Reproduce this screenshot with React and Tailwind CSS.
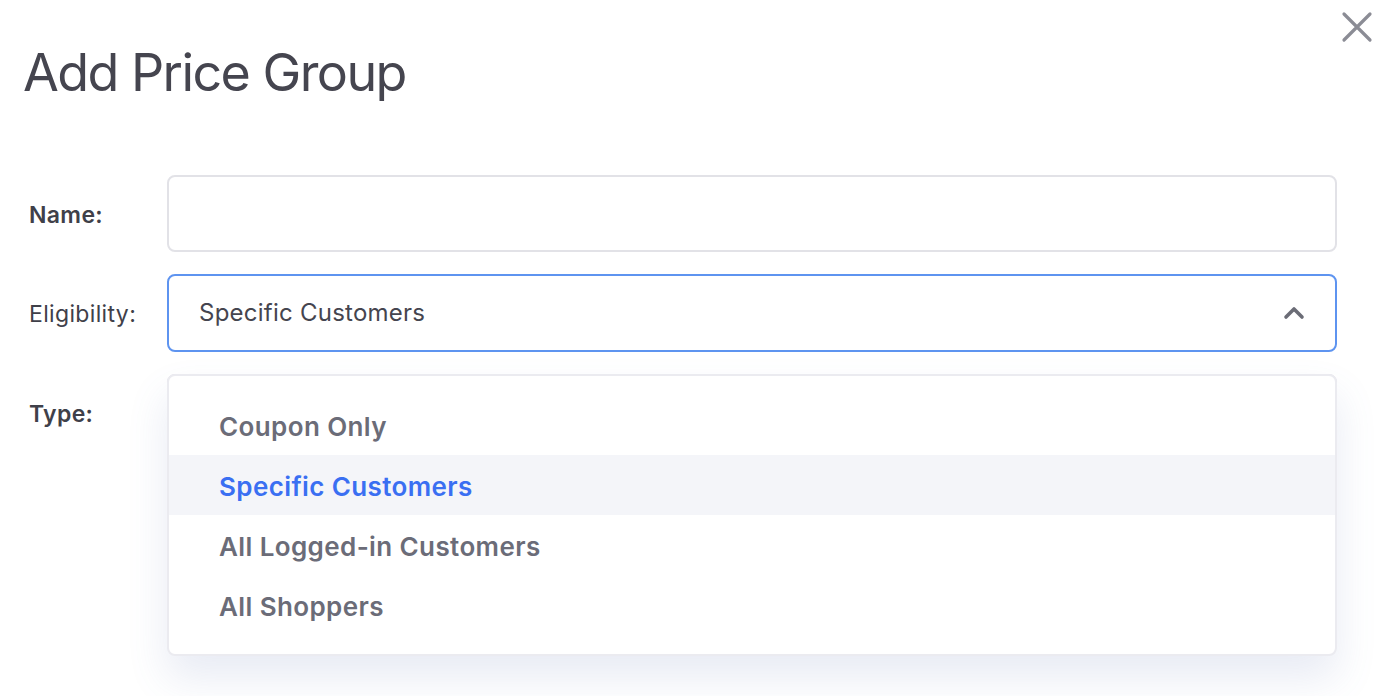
import React, { useState } from "react";

const options = ["Coupon Only", "Specific Customers", "All Logged-in Customers", "All Shoppers"];

const App = () => {
  const [selected, setSelected] = useState("Specific Customers");

  return (
    <div className="relative w-[1390px] h-[696px] bg-white overflow-hidden font-['Inter',sans-serif] text-[#45454f]">
      {/* close */}
      <button className="absolute top-[11px] right-[17px] w-[32px] h-[32px] flex items-center justify-center">
        <svg width="32" height="32" viewBox="0 0 32 32" fill="none" stroke="#8b8c95" strokeWidth="3.2" strokeLinecap="round">
          <path d="M3 3 L29 29 M29 3 L3 29" />
        </svg>
      </button>

      <h1 className="pl-[23px] pt-[43px] text-[52px] leading-[60px] tracking-[-0.03em] font-normal text-[#45454f]">
        Add Price Group
      </h1>

      <div className="mt-[72px] pl-[29px] pr-[53px] flex flex-col gap-[22px]">
        <div className="flex items-center">
          <label className="w-[138px] pt-[3px] text-[23px] tracking-[0.015em] font-semibold text-[#3f4049]">Name:</label>
          <input className="flex-1 h-[77px] rounded-[8px] border-2 border-[#e2e2e7] px-[30px] text-[24px] outline-none" />
        </div>

        <div className="flex items-center">
          <label className="w-[138px] pt-[3px] text-[23px] tracking-[0.015em] text-[#3f4049]">Eligibility:</label>
          <div className="relative flex-1">
            <div className="h-[78px] rounded-[8px] border-2 border-[#5e94f0] flex items-center justify-between pl-[30px] pr-[30px]">
              <span className="text-[24px] tracking-[0.01em] text-[#45454f]">{selected}</span>
              <svg width="22" height="14" viewBox="0 0 22 14" fill="none" stroke="#6b6c76" strokeWidth="3.6" strokeLinecap="round" strokeLinejoin="round">
                <path d="M3 11 L11 3 L19 11" />
              </svg>
            </div>

            <ul className="absolute left-0 right-0 top-[100px] z-10 bg-white rounded-[8px] border-2 border-[#ebebf0] py-[19px] shadow-[0_22px_40px_rgba(90,110,180,0.14)]">
              {options.map((o) => (
                <li
                  key={o}
                  onClick={() => setSelected(o)}
                  className={
                    o === selected
                      ? "h-[60px] flex items-center pl-[50px] pt-[3px] bg-[#f4f5f9] text-[#3a6ff2] text-[26px] tracking-[0.015em] font-semibold"
                      : "h-[60px] flex items-center pl-[50px] pt-[3px] text-[#6b6c78] text-[26px] tracking-[0.015em] font-semibold"
                  }
                >
                  {o}
                </li>
              ))}
            </ul>
          </div>
        </div>

        <div className="flex items-center">
          <label className="w-[138px] pt-[3px] text-[23px] tracking-[0.015em] font-semibold text-[#3f4049]">Type:</label>
          <div className="flex-1 h-[78px] rounded-[8px] border-2 border-[#e2e2e7]" />
        </div>
      </div>
    </div>
  );
};

export default App;
